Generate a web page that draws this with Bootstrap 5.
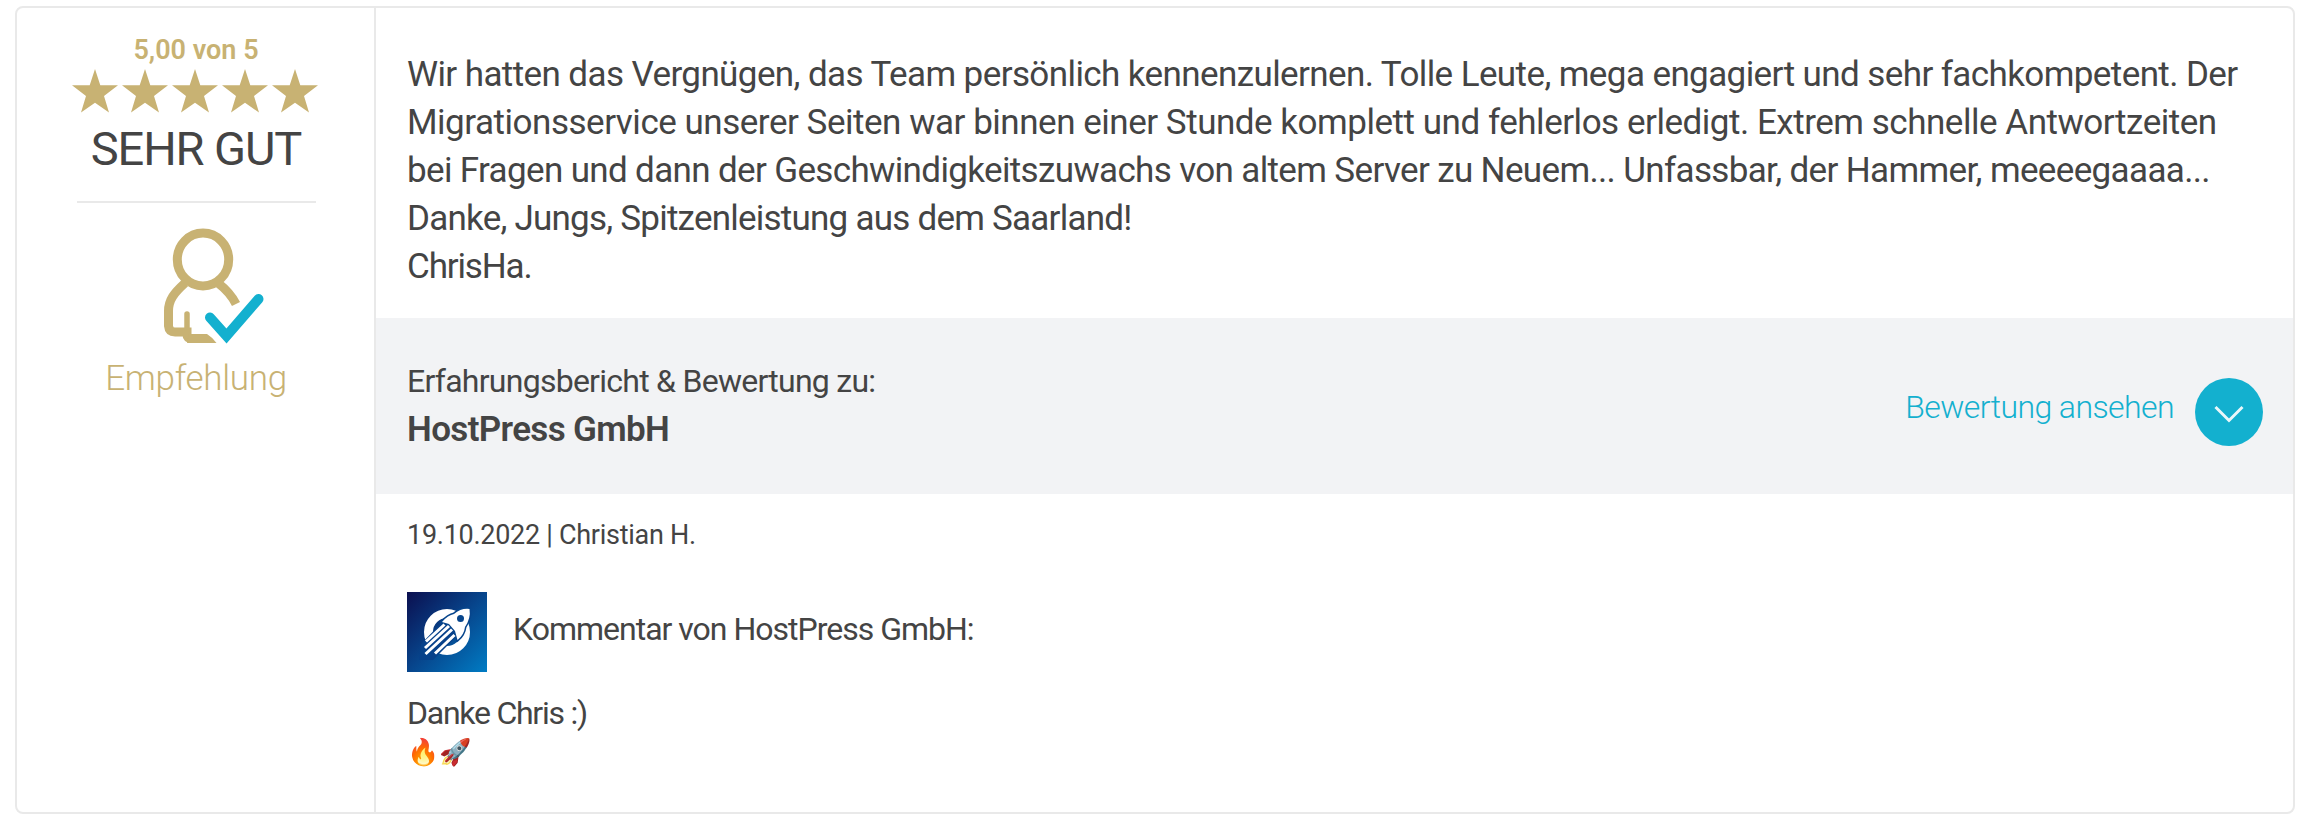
<!DOCTYPE html>
<html lang="de">
<head>
<meta charset="utf-8">
<meta name="viewport" content="width=device-width, initial-scale=1">
<title>Bewertung zu HostPress GmbH</title>
<link href="https://cdn.jsdelivr.net/npm/bootstrap@5.3.0/dist/css/bootstrap.min.css" rel="stylesheet">
<style>
  :root { --gold: #c8b273; --cyan: #13b0cf; --line: #e9e9e9; }
  body { font-family: Roboto, "Liberation Sans", sans-serif; color: #444; background: #fff; }
  .review { margin: 6px 7px 8px 15px; height: 808px; border: 2px solid var(--line); border-radius: 8px; overflow: hidden; }
  .rating { width: 359px; padding: 26px 0 0 1px; border-right: 2px solid var(--line); }
  .gold { color: var(--gold); }
  .score { font-size: 27px; font-weight: 600; line-height: 32px; }
  .stars { width: 250px; height: 50px; margin: 1px 0 -1px -2px; }
  .grade { font-size: 47px; line-height: 56px; letter-spacing: -1.1px; margin-top: 5px; }
  .divider { width: 239px; height: 2px; background: var(--line); margin-top: 24px; }
  .person { width: 104px; height: 116px; margin: 25px 0 0 33px; }
  .recommend { font-size: 35px; font-weight: 300; line-height: 48px; letter-spacing: -.3px; margin-top: 11px; }
  .quote { padding: 43px 0 27px 31px; font-size: 35px; line-height: 48px; white-space: nowrap; }
  .q1 { letter-spacing: -.595px; } .q2 { letter-spacing: -.475px; } .q3 { letter-spacing: -.645px; }
  .q4 { letter-spacing: -.77px; } .q5 { letter-spacing: -1.15px; }
  .subject { height: 176px; padding: 0 30px 0 31px; background: #f2f3f5; }
  .about { font-size: 32px; line-height: 48px; letter-spacing: -.74px; padding-top: 39px; }
  .company { font-size: 35px; font-weight: 600; line-height: 48px; letter-spacing: -.65px; margin-top: 1px; }
  .more { color: var(--cyan); font-size: 32px; font-weight: 300; line-height: 48px; letter-spacing: -.58px; gap: 21px; }
  .more:hover { color: var(--cyan); }
  .more span { margin-top: 1px; }
  .chevron { width: 68px; height: 68px; margin-top: 12px; }
  .reply { padding: 21px 31px 0; }
  .meta { font-size: 27px; line-height: 40px; letter-spacing: -.28px; }
  .comment { font-size: 32px; line-height: 40px; margin-top: 37px; }
  .logo { width: 80px; height: 80px; margin-right: 26px; }
  .by { letter-spacing: -1px; margin-top: -6px; }
  .thanks { letter-spacing: -1.25px; margin-top: 21px; }
  .emoji { font-family: "Noto Color Emoji", sans-serif; font-size: 26px; line-height: 40px; margin-top: -1px; }
</style>
</head>
<body>
<article class="review d-flex">
  <aside class="rating flex-shrink-0 d-flex flex-column align-items-center">
    <div class="score gold">5,00 von 5</div>
    <svg class="stars" viewBox="0 0 250 50" fill="#c8b273" aria-label="5 Sterne">
      <defs><path id="star" d="M25 2 L30.3 18.3 H48 L34 29 L39 45.5 L25 35.8 L11 45.5 L16 29 L2 18.3 H19.700Z"/></defs>
      <use href="#star"/><use href="#star" x="50"/><use href="#star" x="100"/><use href="#star" x="150"/><use href="#star" x="200"/>
    </svg>
    <div class="grade">SEHR GUT</div>
    <div class="divider"></div>
    <svg class="person" viewBox="0 0 104 116" fill="none" stroke="#c8b273" stroke-width="9">
      <ellipse cx="42" cy="31.500" rx="25.700" ry="26.500"/>
      <path d="M24 55C13 65 7.500 72 7.500 83V98Q8 104 14 104H26V107Q26 110.500 30 110.500H46"/>
      <path d="M57 55C66 62 71 68 75 76"/>
      <path d="M26 86V108" stroke-width="5.500" stroke-linecap="round"/>
      <path d="M28 106H46Q51 109 55.500 115H26Z" fill="#c8b273" stroke="none"/>
      <path d="M49 89.500L65.500 108L97.500 71" stroke="#13b0cf" stroke-width="10" stroke-linecap="round"/>
    </svg>
    <div class="recommend gold">Empfehlung</div>
  </aside>
  <section class="flex-grow-1">
    <div class="quote">
      <div class="q1">Wir hatten das Vergnügen, das Team persönlich kennenzulernen. Tolle Leute, mega engagiert und sehr fachkompetent. Der</div>
      <div class="q2">Migrationsservice unserer Seiten war binnen einer Stunde komplett und fehlerlos erledigt. Extrem schnelle Antwortzeiten</div>
      <div class="q3">bei Fragen und dann der Geschwindigkeitszuwachs von altem Server zu Neuem... Unfassbar, der Hammer, meeeegaaaa...</div>
      <div class="q4">Danke, Jungs, Spitzenleistung aus dem Saarland!</div>
      <div class="q5">ChrisHa.</div>
    </div>
    <div class="subject d-flex justify-content-between">
      <div>
        <div class="about">Erfahrungsbericht &amp; Bewertung zu:</div>
        <div class="company">HostPress GmbH</div>
      </div>
      <a class="more d-flex align-items-center text-decoration-none" href="#">
        <span>Bewertung ansehen</span>
        <svg class="chevron" viewBox="0 0 68 68"><circle cx="34" cy="34" r="34" fill="#13b0cf"/><path d="M20.500 29L34 42.500L47.500 29" fill="none" stroke="#e9f7fa" stroke-width="3"/></svg>
      </a>
    </div>
    <div class="reply">
      <div class="meta">19.10.2022 | Christian H.</div>
      <div class="comment">
        <div class="d-flex align-items-center">
          <svg class="logo" viewBox="0 0 80 80">
            <defs><linearGradient id="sky" x1="0" y1="0" x2="1" y2="1"><stop stop-color="#0b0f4f"/><stop offset=".5" stop-color="#07458c"/><stop offset="1" stop-color="#007cc4"/></linearGradient></defs>
            <path fill="url(#sky)" d="M0 0H80V80H0Z"/>
            <circle cx="40" cy="40" r="18.500" fill="none" stroke="#fff" stroke-width="9"/>
            <path d="M14 52L37 28L52 42L32 62L26 68H12Z" fill="#07418a"/>
            <path d="M35 30Q41 23 47 22Q54 16 62.500 17Q64 26 58 35Q57 43 50.500 48L48 39L42 32Z" fill="#fff" stroke="#07458c" stroke-width="3" paint-order="stroke"/>
            <circle cx="53.500" cy="26.500" r="3.500" fill="#07458c"/>
            <path d="M19 49.500L37.500 32.500M18 56L42 34M18.500 62L45 37.500M28 61.500L47.500 43" stroke="#fff" stroke-width="3"/>
          </svg>
          <div class="by">Kommentar von HostPress GmbH:</div>
        </div>
        <div class="thanks">Danke Chris :)</div>
        <div class="emoji">🔥🚀</div>
      </div>
    </div>
  </section>
</article>
<script src="https://cdn.jsdelivr.net/npm/bootstrap@5.3.0/dist/js/bootstrap.bundle.min.js"></script>
</body>
</html>
